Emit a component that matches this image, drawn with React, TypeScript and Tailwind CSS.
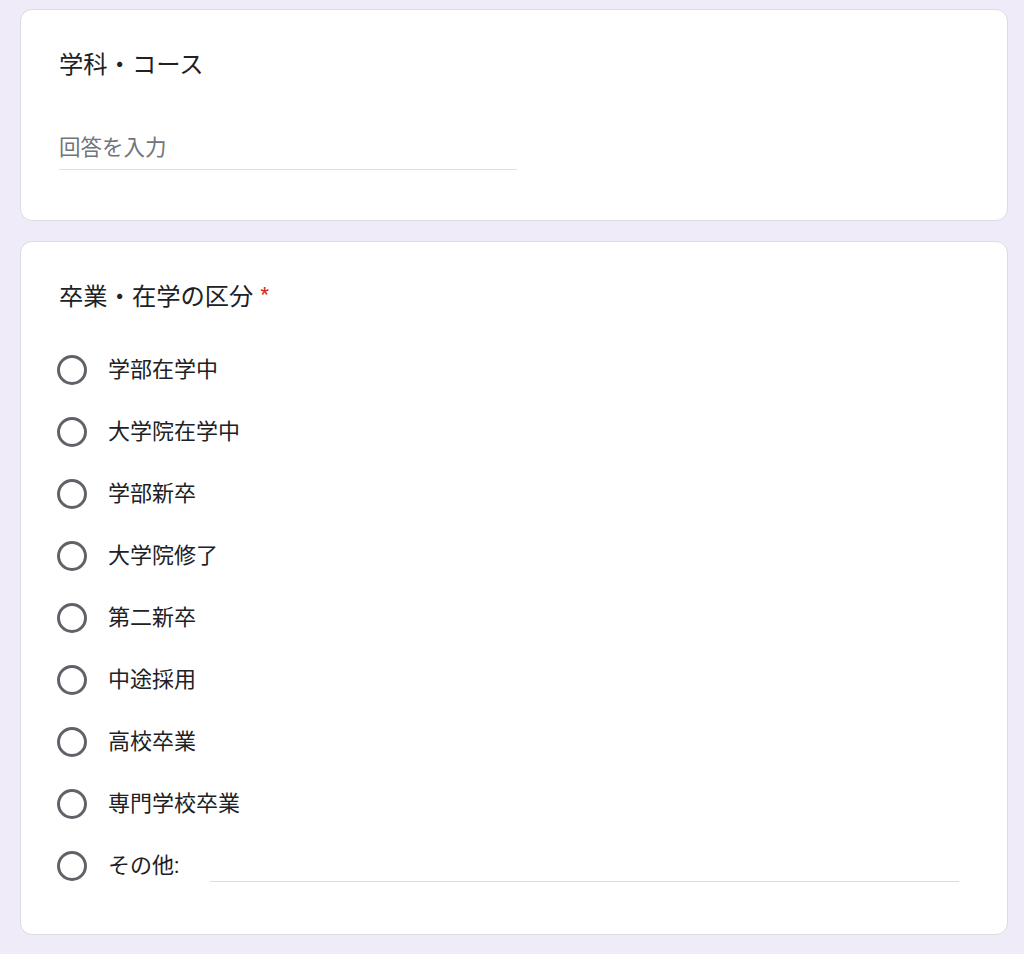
const FONT = "font-['Roboto','Noto_Sans_CJK_JP',sans-serif]";

const OPTIONS = [
  "学部在学中",
  "大学院在学中",
  "学部新卒",
  "大学院修了",
  "第二新卒",
  "中途採用",
  "高校卒業",
  "専門学校卒業",
];

function Radio() {
  return <div className="w-[30px] h-[30px] rounded-full border-[3px] border-[#5f6368] shrink-0" />;
}

export default function App() {
  return (
    <div className={`min-h-[954px] bg-[#f0ebf8] pt-[9px] ${FONT} text-[#202124]`}>
      <div className="ml-[20px] w-[988px] flex flex-col gap-[20px]">
        {/* テキスト回答 */}
        <div className="bg-white border border-[#dadce0] rounded-[12px] pt-[39px] pb-[50px] px-[38px]">
          <div className="text-[24.3px] leading-[32px]">学科・コース</div>
          <div className="mt-[53px] w-[458px] h-[36px] border-b border-[#e0e0e0] text-[21.5px] leading-[28px] text-[#70757a]">
            回答を入力
          </div>
        </div>

        {/* ラジオ選択 */}
        <div className="bg-white border border-[#dadce0] rounded-[12px] pt-[39px] pb-[37px] px-[36px]">
          <div className="text-[24.3px] leading-[32px] pl-[2px] flex items-start">
            卒業・在学の区分
            <span className="text-[#d93025] text-[18px] ml-[7px] leading-[26px] font-bold">*</span>
          </div>
          <div className="mt-[26px] flex flex-col">
            {OPTIONS.map((o) => (
              <div key={o} className="h-[62px] flex items-center gap-[21px]">
                <Radio />
                <span className="text-[22px] leading-[28px]">{o}</span>
              </div>
            ))}
            <div className="h-[62px] flex items-center gap-[21px]">
              <Radio />
              <span className="text-[22px] leading-[28px]">その他:</span>
              <div className="ml-[10px] w-[749px] h-[15px] border-b border-[#dadce0] self-end mb-[15px]" />
            </div>
          </div>
        </div>
      </div>
    </div>
  );
}
